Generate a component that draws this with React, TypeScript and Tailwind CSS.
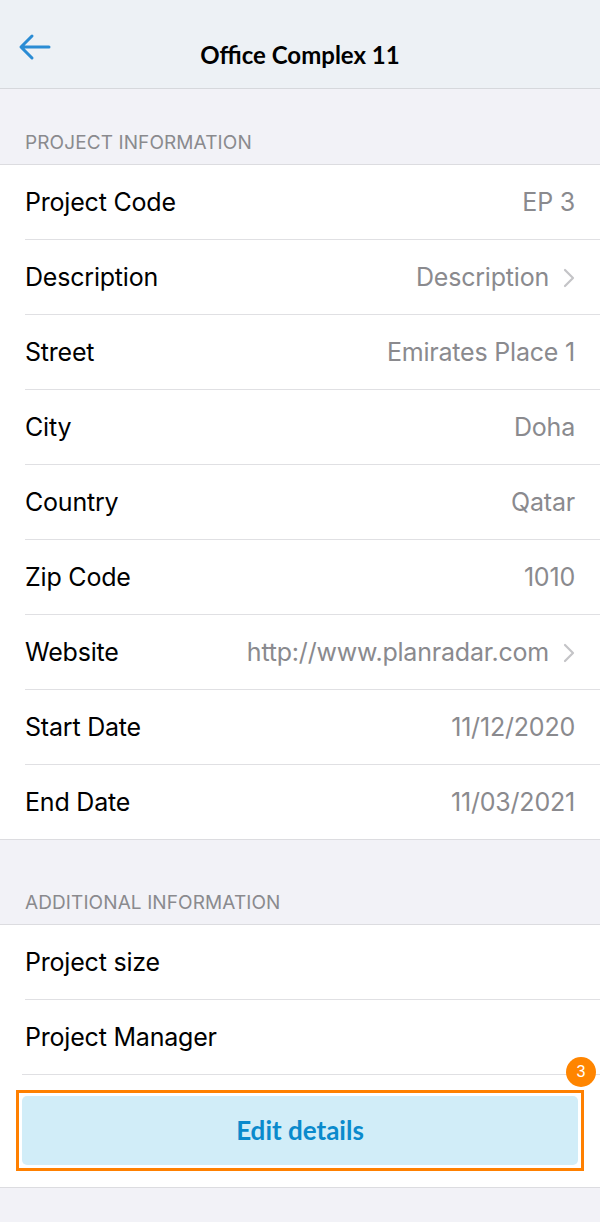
import React from "react";

const sf = { fontFamily: "Inter, 'Noto Sans', sans-serif" };

function Chevron() {
  return (
    <svg width="12" height="20" viewBox="0 0 12 20" className="ml-[14px]">
      <path d="M2 2 L10 10 L2 18" fill="none" stroke="#c4c4c7" strokeWidth="2.2" strokeLinecap="round" strokeLinejoin="round" />
    </svg>
  );
}

function Row({ label, value, chevron, last }: { label: string; value?: string; chevron?: boolean; last?: boolean }) {
  return (
    <div className="pl-[25px]">
      <div className={`flex items-center pr-[25px] pt-[2px] ${last ? "h-[74px]" : "h-[75px] border-b border-[#e0e0e3]"}`}>
        <span className="text-[25px] text-black tracking-[-0.2px]">{label}</span>
        <div className="ml-auto flex items-center">
          {value && <span className="text-[25px] text-[#8a8a8e] tracking-[-0.2px]">{value}</span>}
          {chevron && <Chevron />}
        </div>
      </div>
    </div>
  );
}

function SectionHeader({ title, h }: { title: string; h: string }) {
  return (
    <div className={`${h} flex items-end pb-[7px] px-[25px] border-b border-[#dcdce0]`}>
      <span className="text-[19px] text-[#8a8a8e] tracking-[0.1px]">{title}</span>
    </div>
  );
}

export default function App() {
  return (
    <div className="w-[600px] h-[1222px] bg-[#f2f2f7] overflow-hidden" style={sf}>
      <div className="h-[89px] bg-[#edf1f5] border-b border-[#d6d8dc] flex items-center relative">
        <svg width="34" height="30" viewBox="0 0 34 30" className="absolute left-[17px] top-[32px]">
          <path d="M32 15 H5 M15 4 L4 15 L15 26" fill="none" stroke="#2a8cd4" strokeWidth="3" strokeLinecap="round" strokeLinejoin="round" />
        </svg>
        <div className="flex-1 text-center text-[24px] font-bold text-black mt-[22px]" style={{ fontFamily: "Lato, sans-serif" }}>
          Office Complex 11
        </div>
      </div>
      <SectionHeader title="PROJECT INFORMATION" h="h-[76px]" />
      <div className="bg-white border-b border-[#dcdce0]">
        <Row label="Project Code" value="EP 3" />
        <Row label="Description" value="Description" chevron />
        <Row label="Street" value="Emirates Place 1" />
        <Row label="City" value="Doha" />
        <Row label="Country" value="Qatar" />
        <Row label="Zip Code" value="1010" />
        <Row label="Website" value="http://www.planradar.com" chevron />
        <Row label="Start Date" value="11/12/2020" />
        <Row label="End Date" value="11/03/2021" last />
      </div>
      <SectionHeader title="ADDITIONAL INFORMATION" h="h-[85px]" />
      <div className="bg-white border-b border-[#dcdce0] relative">
        <Row label="Project size" />
        <div className="pl-[22px]">
          <div className="h-[75px] flex items-center pl-[3px] pt-[2px] border-b border-[#e0e0e3]">
            <span className="text-[25px] text-black tracking-[-0.2px]">Project Manager</span>
          </div>
        </div>
        <div className="pt-[15px] pb-[16px] px-[16px]">
          <div className="border-[3px] border-[#ff8000] p-[3px]">
            <div className="h-[69px] rounded-[5px] bg-[#d1edf8] flex items-center justify-center text-[26px] font-bold text-[#0a8acc]" style={{ fontFamily: "Lato, sans-serif" }}>
              Edit details
            </div>
          </div>
        </div>
        <div className="absolute left-[566px] top-[132px] w-[30px] h-[30px] rounded-full bg-[#ff8500] flex items-center justify-center text-white text-[16px]" style={{ fontFamily: "'Liberation Sans', sans-serif" }}>
          3
        </div>
      </div>
    </div>
  );
}
